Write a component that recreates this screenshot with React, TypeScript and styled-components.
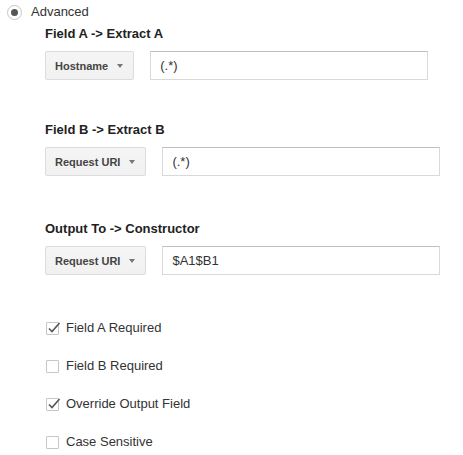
import React from "react";
import styled, { createGlobalStyle } from "styled-components";

const GlobalStyle = createGlobalStyle`
  body {
    margin: 0;
    background: #ffffff;
    font-family: "Liberation Sans", Arial, sans-serif;
    color: #333333;
  }
`;

const Page = styled.div`
  width: 463px;
  height: 455px;
  box-sizing: border-box;
  padding-top: 4px;
`;

const RadioRow = styled.label`
  display: flex;
  align-items: center;
  gap: 9px;
  height: 16px;
  padding-left: 7px;
  font-size: 13px;
  line-height: 16px;
  color: #333333;
`;

const RadioCircle = styled.span`
  width: 13px;
  height: 13px;
  border: 1px solid #c6c6c6;
  border-radius: 50%;
  background: #ffffff;
  display: flex;
  align-items: center;
  justify-content: center;

  &::after {
    content: "";
    width: 7px;
    height: 7px;
    border-radius: 50%;
    background: #555555;
  }
`;

const Body = styled.div`
  padding-left: 45px;
  display: flex;
  flex-direction: column;
`;

const Section = styled.div<{ $top: number }>`
  margin-top: ${({ $top }) => $top}px;
  display: flex;
  flex-direction: column;
  gap: 9px;
`;

const Heading = styled.div`
  font-size: 13px;
  line-height: 16px;
  font-weight: bold;
  color: #222222;
`;

const FieldRow = styled.div`
  display: flex;
  gap: 16px;
`;

const Select = styled.div`
  display: flex;
  align-items: center;
  gap: 9px;
  height: 29px;
  box-sizing: border-box;
  padding: 0 10px 0 9px;
  border: 1px solid #dcdcdc;
  border-radius: 2px;
  background: linear-gradient(#f5f5f5, #f1f1f1);
  font-size: 11px;
  font-weight: bold;
  color: #444444;
`;

const Caret = styled.span`
  width: 0;
  height: 0;
  border-left: 3px solid transparent;
  border-right: 3px solid transparent;
  border-top: 4px solid #777777;
  margin-top: 1px;
`;

const Input = styled.div`
  width: 278px;
  height: 29px;
  box-sizing: border-box;
  padding-left: 9px;
  display: flex;
  align-items: center;
  border: 1px solid #d9d9d9;
  border-top-color: #c0c0c0;
  font-size: 13px;
  color: #333333;
`;

const Checks = styled.div`
  margin-top: 45px;
  padding-left: 1px;
  display: flex;
  flex-direction: column;
  gap: 22px;
`;

const CheckRow = styled.label`
  display: flex;
  align-items: center;
  gap: 7px;
  height: 16px;
  font-size: 13px;
  line-height: 16px;
  color: #333333;
`;

const Box = styled.span`
  width: 13px;
  height: 13px;
  box-sizing: border-box;
  border: 1px solid #c6c6c6;
  border-radius: 1px;
  background: #ffffff;
  position: relative;
`;

const Tick = styled.svg`
  position: absolute;
  left: 0px;
  top: -2px;
`;

const Checkbox: React.FC<{ checked: boolean; label: string }> = ({ checked, label }) => (
  <CheckRow>
    <Box>
      {checked && (
        <Tick width="15" height="14" viewBox="0 0 15 14">
          <path d="M2 7.5 L5 10.5 L12.5 2" fill="none" stroke="#555" strokeWidth="1.6" />
        </Tick>
      )}
    </Box>
    {label}
  </CheckRow>
);

const fields = [
  { title: "Field A -> Extract A", select: "Hostname", value: "(.*)", top: 6 },
  { title: "Field B -> Extract B", select: "Request URI", value: "(.*)", top: 42 },
  { title: "Output To -> Constructor", select: "Request URI", value: "$A1$B1", top: 45 },
];

const options = [
  { label: "Field A Required", checked: true },
  { label: "Field B Required", checked: false },
  { label: "Override Output Field", checked: true },
  { label: "Case Sensitive", checked: false },
];

const App: React.FC = () => (
  <Page>
    <GlobalStyle />
    <RadioRow>
      <RadioCircle />
      Advanced
    </RadioRow>
    <Body>
      {fields.map((f) => (
        <Section key={f.title} $top={f.top}>
          <Heading>{f.title}</Heading>
          <FieldRow>
            <Select>
              {f.select}
              <Caret />
            </Select>
            <Input>{f.value}</Input>
          </FieldRow>
        </Section>
      ))}
      <Checks>
        {options.map((o) => (
          <Checkbox key={o.label} label={o.label} checked={o.checked} />
        ))}
      </Checks>
    </Body>
  </Page>
);

export default App;
